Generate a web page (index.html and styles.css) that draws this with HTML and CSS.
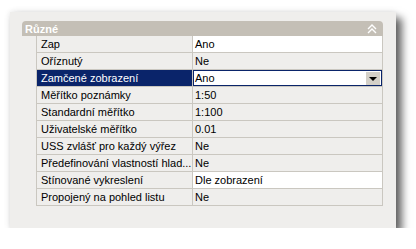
FILE: index.html
```html
<!DOCTYPE html>
<html lang="cs">
<head>
	<meta charset="UTF-8" />
	<title>Vlastnosti</title>
	<link rel="stylesheet" href="styles.css">
</head>
<body>
	<div class="panel">
		<div class="group-head">
			<span>Různé</span>
			<svg class="collapse" width="10" height="10" viewBox="0 0 10 10">
				<polyline points="1,5 5,1 9,5" />
				<polyline points="1,9 5,5 9,9" />
			</svg>
		</div>
		<div class="props">
			<div class="row"><div class="name">Zap</div><div class="val white">Ano</div></div>
			<div class="row"><div class="name">Oříznutý</div><div class="val">Ne</div></div>
			<div class="row selected">
				<div class="name">Zamčené zobrazení</div>
				<div class="val white edit">Ano<span class="drop"><i></i></span></div>
			</div>
			<div class="row"><div class="name">Měřítko poznámky</div><div class="val">1:50</div></div>
			<div class="row"><div class="name">Standardní měřítko</div><div class="val">1:100</div></div>
			<div class="row"><div class="name">Uživatelské měřítko</div><div class="val">0.01</div></div>
			<div class="row"><div class="name">USS zvlášť pro každý výřez</div><div class="val">Ne</div></div>
			<div class="row"><div class="name">Předefinování vlastností hlad...</div><div class="val">Ne</div></div>
			<div class="row"><div class="name">Stínované vykreslení</div><div class="val white">Dle zobrazení</div></div>
			<div class="row"><div class="name">Propojený na pohled listu</div><div class="val">Ne</div></div>
		</div>
	</div>
</body>
</html>
```

FILE: styles.css
```css
body {
	margin: 0;
	background: #fff;
	font-family: "Liberation Sans", Arial, sans-serif;
	font-size: 11px;
	color: #000;
}
.panel {
	margin: 12px 0 0 10px;
	width: 386px;
	height: 216px;
	box-sizing: border-box;
	padding: 9px 13px 0 12px;
	background: #efeeec;
	box-shadow: 6px 6px 8px rgba(0, 0, 0, 0.6), 0 0 6px rgba(0, 0, 0, 0.12);
}
.group-head {
	display: flex;
	align-items: center;
	justify-content: space-between;
	height: 15px;
	padding: 0 6px 0 3px;
	background: #c4bfb6;
	border-radius: 4px 4px 0 0;
	color: #fff;
	font-weight: bold;
	font-size: 11px;
}
.collapse polyline {
	fill: none;
	stroke: #fff;
	stroke-width: 1.4;
}
.props {
	margin-left: 14px;
}
.row {
	display: grid;
	grid-template-columns: 156px 1fr;
	height: 17px;
	box-sizing: border-box;
	border-bottom: 1px solid #cac7c0;
	border-left: 1px solid #cac7c0;
	border-right: 1px solid #cac7c0;
	line-height: 16px;
}
.name {
	padding-left: 4px;
	white-space: nowrap;
	overflow: hidden;
	border-right: 1px solid #cac7c0;
}
.val {
	padding-left: 2px;
}
.white {
	background: #fff;
}
.selected .name {
	background: #0a246a;
	color: #fff;
}
.edit {
	position: relative;
	box-shadow: inset 0 0 0 1px #0a246a;
}
.drop {
	position: absolute;
	right: 2px;
	top: 2px;
	width: 14px;
	height: 13px;
	background: #d4d0c8;
	display: flex;
	align-items: center;
	justify-content: center;
}
.drop i {
	width: 0;
	height: 0;
	border-left: 4px solid transparent;
	border-right: 4px solid transparent;
	border-top: 4px solid #000;
}
```
